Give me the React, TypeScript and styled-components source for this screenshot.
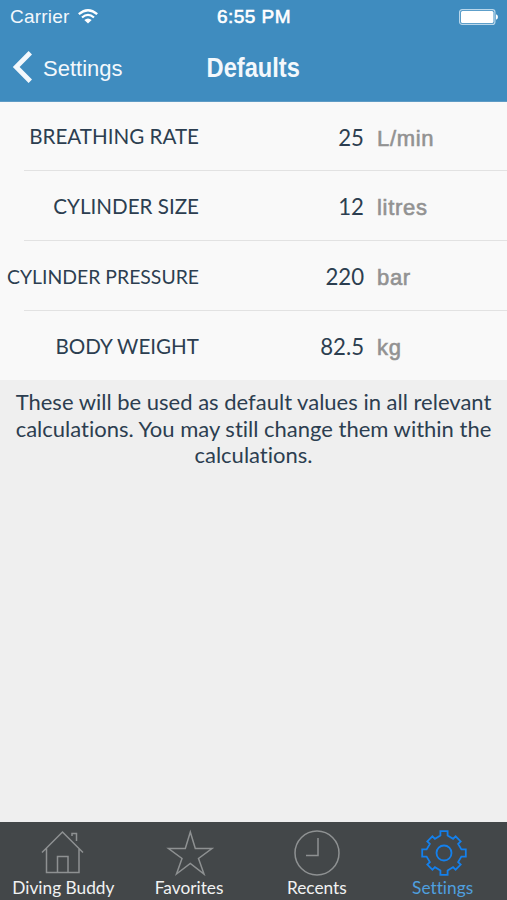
import React from "react";
import styled, { createGlobalStyle } from "styled-components";

const Global = createGlobalStyle`
  * { box-sizing: border-box; }
  body { margin: 0; background: #efefef; -webkit-font-smoothing: antialiased; }
`;

const Screen = styled.div`
  display: flex;
  flex-direction: column;
  width: 507px;
  height: 900px;
  overflow: hidden;
  background: #efefef;
  color: #2c3e50;
  font-family: Lato, sans-serif;
  font-variant-ligatures: none;
`;

const Header = styled.header`
  flex: none;
  height: 102px;
  background: #3f8cbf;
  border-bottom: 1px solid #5e9bc5;
  color: #f3f8fc;
  font-family: "Liberation Sans", sans-serif;
`;

const StatusBar = styled.div`
  display: grid;
  grid-template-columns: 1fr auto 1fr;
  align-items: center;
  height: 33px;
  padding: 0 9px 0 10px;
`;

const Carrier = styled.div`
  display: flex;
  align-items: center;
  gap: 9px;
  font-size: 19px;
  letter-spacing: 0.2px;
  line-height: 33px;
`;

const Clock = styled.div`
  font-size: 19px;
  line-height: 33px;
  letter-spacing: 0.45px;
  color: #fff;
  -webkit-text-stroke: 0.6px #fff;
`;

const BatteryIcon = styled.svg`
  justify-self: end;
`;

const NavBar = styled.nav`
  display: grid;
  grid-template-columns: 1fr auto 1fr;
  align-items: center;
  height: 68px;
  padding: 0 12px;
`;

const BackButton = styled.button`
  display: flex;
  align-items: center;
  gap: 10px;
  padding: 0;
  border: 0;
  background: none;
  color: inherit;
  font: 22px/30px "Liberation Sans", sans-serif;
`;

const BackLabel = styled.span`
  padding-top: 3px;
`;

const Title = styled.h1`
  margin: 0;
  font-size: 28.5px;
  line-height: 34px;
  font-weight: 700;
  transform: scaleX(0.83);
`;

const Rows = styled.main`
  flex: none;
  height: 278px;
  background: #f9f9f9;
`;

const Row = styled.label<{ $first?: boolean }>`
  display: grid;
  grid-template-columns: 199px 165px 1fr;
  height: ${(p) => (p.$first ? 68 : 70)}px;
  padding-top: ${(p) => (p.$first ? 0 : 1)}px;
  line-height: ${(p) => (p.$first ? 69 : 70)}px;
  background: ${(p) =>
    p.$first ? "none" : "linear-gradient(#e2e2e2, #e2e2e2) 24px 0 / 483px 1px no-repeat"};
`;

const Name = styled.span<{ $compact?: boolean }>`
  padding-top: ${(p) => (p.$compact ? 1 : 0)}px;
  height: 68px;
  font-size: ${(p) => (p.$compact ? 19.4 : 20.6)}px;
  text-align: right;
  white-space: nowrap;
`;

const Value = styled.span`
  padding-top: 1px;
  height: 68px;
  font-size: 22.2px;
  text-align: right;
`;

const Unit = styled.span`
  padding: 2px 0 0 13px;
  height: 68px;
  color: #929292;
  font-family: "Liberation Sans", sans-serif;
  font-size: 22px;
  letter-spacing: 0.7px;
  -webkit-text-stroke: 0.6px #929292;
`;

const Note = styled.p`
  flex: 1;
  margin: 0;
  padding: 9px 10px 0;
  font-size: 22px;
  line-height: 26.5px;
  text-align: center;
`;

const TabBar = styled.footer`
  display: grid;
  grid-template-columns: repeat(4, 1fr);
  flex: none;
  height: 78px;
  background: #434749;
`;

const Tab = styled.button<{ $active?: boolean }>`
  display: flex;
  flex-direction: column;
  align-items: center;
  padding: 6px 0 0;
  border: 0;
  background: none;
  color: ${(p) => (p.$active ? "#4f9fdf" : "#f1f2f2")};
  font: 17.3px/20px Lato, sans-serif;
  font-variant-ligatures: none;
  white-space: nowrap;
`;

const TabLabel = styled.span<{ $nudge?: boolean }>`
  padding-right: ${(p) => (p.$nudge ? 2 : 0)}px;
`;

const TabIcon = styled.svg<{ $active?: boolean }>`
  display: block;
  width: 50px;
  height: 50px;
  fill: none;
  stroke: ${(p) => (p.$active ? "#1480ec" : "#8e9192")};
  stroke-width: ${(p) => (p.$active ? 1.8 : 1.5)};
`;

const fields = [
  { name: "BREATHING RATE", value: "25", unit: "L/min" },
  { name: "CYLINDER SIZE", value: "12", unit: "litres" },
  { name: "CYLINDER PRESSURE", value: "220", unit: "bar", compact: true },
  { name: "BODY WEIGHT", value: "82.5", unit: "kg" },
];

// Eight teeth around the hub; the diagonal ones are slightly shorter.
const gearPoints = Array.from({ length: 8 }, (_, i) => {
  const angle = (i * Math.PI) / 4;
  const diagonal = i % 2 === 1;
  const tip = diagonal ? 20 : 21.8;
  const base = diagonal ? 16.4 : 17.4;
  return [
    [-3.6, -base],
    [-3.6, -tip],
    [3.6, -tip],
    [3.6, -base],
  ]
    .map(([x, y]) => {
      const px = 25 + x * Math.cos(angle) - y * Math.sin(angle);
      const py = 25 + x * Math.sin(angle) + y * Math.cos(angle);
      return `${px.toFixed(2)},${py.toFixed(2)}`;
    })
    .join(" ");
}).join(" ");

export default function App() {
  return (
    <>
      <Global />
      <Screen>
        <Header>
          <StatusBar>
            <Carrier>
              Carrier
              <svg width="20" height="15" viewBox="0 0 20 15" fill="none" stroke="#fff" strokeWidth="2.3">
                <path d="M.8 5.2Q10-2.8 19.2 5.2M4 8.500q6-5.200 12 0" />
                <path d="M6.3 11q3.7-3 7.4 0L10 14.500z" fill="#fff" stroke="none" />
              </svg>
            </Carrier>
            <Clock>6:55 PM</Clock>
            <BatteryIcon width="39" height="16" viewBox="0 0 39 16">
              <rect x=".6" y=".6" width="35.3" height="14.8" rx="2.5" fill="none" stroke="#b9d7eb" strokeWidth="1.2" />
              <rect x="2" y="2" width="32.5" height="12" rx="1.5" fill="#fff" />
              <path d="M37 5.3q2 .5 2 2.7t-2 2.7z" fill="#fff" />
            </BatteryIcon>
          </StatusBar>
          <NavBar>
            <BackButton>
              <svg width="21" height="32" viewBox="0 0 21 32" fill="none" stroke="currentColor" strokeWidth="4.8">
                <path d="M18.3 1.800 4.200 16l14.100 14.200" />
              </svg>
              <BackLabel>Settings</BackLabel>
            </BackButton>
            <Title>Defaults</Title>
          </NavBar>
        </Header>
        <Rows>
          {fields.map((f, i) => (
            <Row key={f.name} $first={i === 0}>
              <Name $compact={f.compact}>{f.name}</Name>
              <Value>{f.value}</Value>
              <Unit>{f.unit}</Unit>
            </Row>
          ))}
        </Rows>
        <Note>
          These will be used as default values in all relevant calculations. You may still change them within the
          calculations.
        </Note>
        <TabBar>
          <Tab>
            <TabIcon viewBox="0 0 50 50">
              <path d="M4 24.5 24.5 4 45 24.5M8.5 20.5V44.500h32.500V20.500M19.500 44V28.500h10.500V44M34 8V5.500h4.500V13" />
            </TabIcon>
            <TabLabel>Diving Buddy</TabLabel>
          </Tab>
          <Tab>
            <TabIcon viewBox="0 0 50 50">
              <path d="M25.300 4l5 16.500h16.700L33.500 30.500l5.500 15.500L25.300 35.500 11.500 46l5.500-15.500L3.500 20.500h16.800z" />
            </TabIcon>
            <TabLabel $nudge>Favorites</TabLabel>
          </Tab>
          <Tab>
            <TabIcon viewBox="0 0 50 50">
              <circle cx="25" cy="25" r="22" />
              <path d="M26 10v17.500H14" />
            </TabIcon>
            <TabLabel>Recents</TabLabel>
          </Tab>
          <Tab $active>
            <TabIcon viewBox="0 0 50 50" $active>
              <polygon points={gearPoints} />
              <circle cx="25" cy="25" r="7.500" />
            </TabIcon>
            <TabLabel $nudge>Settings</TabLabel>
          </Tab>
        </TabBar>
      </Screen>
    </>
  );
}
